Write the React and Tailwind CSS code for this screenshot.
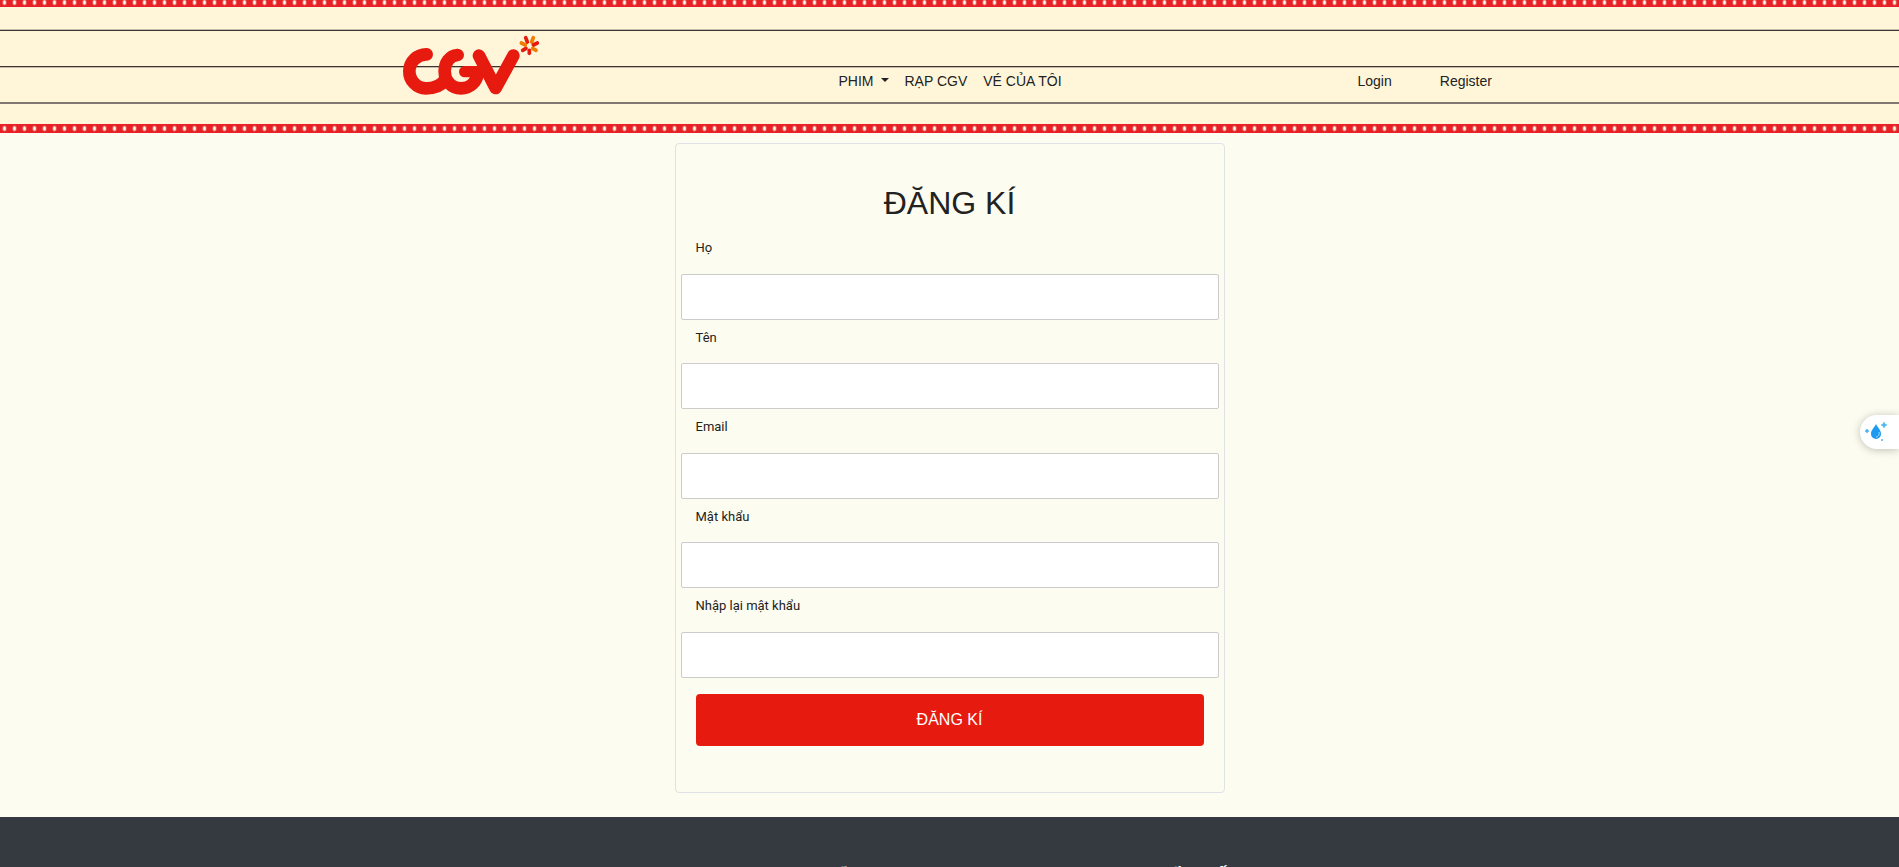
import React from "react";

function MarqueeLights({ id, className }) {
  return (
    <svg className={`block w-full ${className}`} aria-hidden="true">
      <defs>
        <pattern id={id} width="10" height="9" patternUnits="userSpaceOnUse">
          <rect width="10" height="9" fill="#e72127" />
          <ellipse cx="4.5" cy="4.5" rx="2.4" ry="2.9" fill="#f0907c" fillOpacity="0.5" />
          <ellipse cx="4.5" cy="4.5" rx="1.5" ry="2.2" fill="#fde3cf" />
          <rect x="4" y="3" width="1" height="3" fill="#fffdf2" />
        </pattern>
      </defs>
      <rect width="100%" height="9" fill={`url(#${id})`} />
    </svg>
  );
}

function Logo() {
  return (
    <svg width="138" height="61" viewBox="36 30 414 183" role="img" aria-label="CGV">
      <g fill="none" stroke="#e71a0f" strokeWidth="38" strokeLinecap="round" strokeLinejoin="round">
        <path d="M110 88 A51 51 0 0 0 108 190 C134 190 152 182 164 166" />
        <path d="M203 90 C178 92 164 114 164 139 C164 168 184 190 213 190 C240 190 258 172 263 148" />
        <path d="M224 140 H284" strokeWidth="34" />
        <path d="M267 92 L317 189 L370 92" />
      </g>
      <g fill="none" strokeWidth="11" strokeLinecap="round">
        <path d="M407 38 L412 51" stroke="#e71a0f" />
        <path d="M430 38 L425 51" stroke="#f07d00" />
        <path d="M442 54 L430 60" stroke="#e71a0f" />
        <path d="M438 76 L428 70" stroke="#f07d00" />
        <path d="M418 85 L418 76" stroke="#e71a0f" />
        <path d="M398 76 L408 70" stroke="#e71a0f" />
        <path d="M394 54 L406 60" stroke="#f07d00" />
      </g>
    </svg>
  );
}

const fields = [
  { id: "ho", label: "Họ", type: "text" },
  { id: "ten", label: "Tên", type: "text" },
  { id: "email", label: "Email", type: "email" },
  { id: "password", label: "Mật khẩu", type: "password" },
  { id: "confirm", label: "Nhập lại mật khẩu", type: "password" },
];

export default function App() {
  return (
    <div className="h-screen overflow-hidden bg-[#fdfcf0] font-['Liberation_Sans',Arial,sans-serif] text-[#222]">
      <header className="bg-[#fff6da]">
        <div className="h-[7px] overflow-hidden">
          <MarqueeLights id="lights-top" className="-mt-[2px] h-[9px]" />
        </div>
        <div className="h-[117px] bg-[linear-gradient(to_bottom,transparent_22px,#c4bca8_22px,#c4bca8_23px,#3b3432_23px,#3b3432_24px,transparent_24px,transparent_59px,#3b3432_59px,#3b3432_60px,#c4bca8_60px,#c4bca8_61px,transparent_61px,transparent_95px,#807770_95px,#807770_97px,transparent_97px)]">
          <div className="mx-auto flex max-w-[1140px] items-start pl-[22px] pt-7 text-sm">
            <a href="#" className="w-[437px] shrink-0">
              <Logo />
            </a>
            <nav className="flex w-[519px] shrink-0 gap-4 pt-9">
              <button type="button" className="flex items-center gap-[7px]">
                PHIM
                <svg width="8" height="4" viewBox="0 0 8 4" className="-mt-[2px]" aria-hidden="true">
                  <path d="M0 0 H8 L4 4 Z" fill="#222" />
                </svg>
              </button>
              <a href="#">RẠP CGV</a>
              <a href="#">VÉ CỦA TÔI</a>
            </nav>
            <div className="flex gap-12 pt-9">
              <a href="#">Login</a>
              <a href="#">Register</a>
            </div>
          </div>
        </div>
        <MarqueeLights id="lights-bottom" className="h-[9px]" />
      </header>

      <main className="px-4 pb-6 pt-[10px]">
        <form className="mx-auto max-w-[550px] rounded border border-[#dee2e6] px-[5px] pb-[46px] pt-10">
          <h1 className="mb-2 text-center text-[32px] leading-[38px]">ĐĂNG KÍ</h1>
          {fields.map((field) => (
            <div key={field.id}>
              <label
                htmlFor={field.id}
                className="block px-[15px] pb-4 pt-2 font-[Roboto,sans-serif] text-[13px] leading-normal"
              >
                {field.label}
              </label>
              <input
                id={field.id}
                type={field.type}
                className="block h-[46px] w-full rounded-xs border border-[#ccc] bg-white px-3"
              />
            </div>
          ))}
          <div className="px-[15px] pt-4">
            <button
              type="submit"
              className="h-[52px] w-full rounded bg-[#e71a0f] text-base text-white"
            >
              ĐĂNG KÍ
            </button>
          </div>
        </form>
      </main>

      <footer className="bg-[#343a40] pb-12 pt-12 text-white">
        <div className="mx-auto grid max-w-[1140px] grid-cols-3 text-xl leading-6">
          <h2 className="col-start-2 pl-9">TUYỂN DỤNG</h2>
          <h2 className="pl-4">KẾT NỐI</h2>
        </div>
      </footer>

      <button
        type="button"
        aria-label="Assistant"
        className="fixed right-0 top-[415px] flex h-[34px] w-[39px] items-center rounded-l-full bg-white pl-1 shadow-[0_1px_8px_rgba(0,0,0,0.25)]"
      >
        <svg width="24" height="24" viewBox="0 0 24 24" aria-hidden="true">
          <path d="M12 4 C10 8 7 10 7 14 A5 5 0 0 0 17 14 C17 10 14 8 12 4 Z" fill="#1e9bf0" />
          <path d="M15 12 C16 15 14 17 12 17" stroke="#9ed6fb" strokeWidth="1" fill="none" />
          <path
            d="M20 2 L21 4 L23 5 L21 6 L20 8 L19 6 L17 5 L19 4 Z M3 9 L4 10 L5 11 L4 12 L3 13 L2 12 L1 11 L2 10 Z"
            fill="#4ab4f5"
            stroke="#4ab4f5"
            strokeWidth="0.5"
          />
          <circle cx="18" cy="20" r="1" fill="#4ab4f5" />
        </svg>
      </button>
    </div>
  );
}
